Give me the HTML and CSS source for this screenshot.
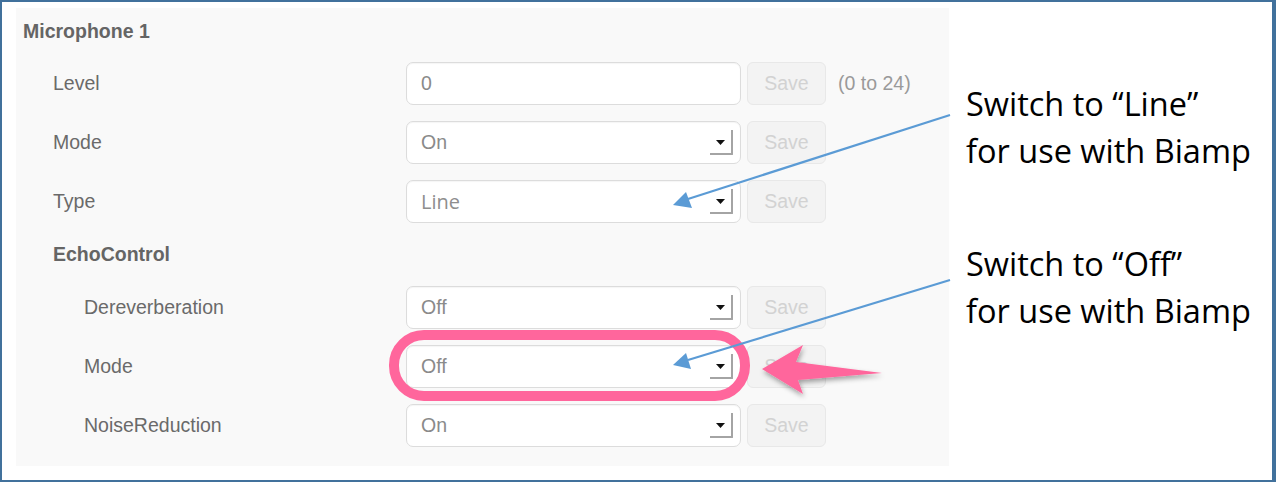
FILE: index.html
```html
<!DOCTYPE html>
<html>
<head>
<meta charset="utf-8">
<link rel="stylesheet" href="styles.css">
</head>
<body>
<div class="frame">
  <div class="panel">
    <div class="heading">Microphone 1</div>
    <div class="row">
      <span class="label">Level</span>
      <div class="field"><span class="value">0</span></div>
      <span class="save">Save</span>
      <span class="hint">(0 to 24)</span>
    </div>
    <div class="row">
      <span class="label">Mode</span>
      <div class="field select"><span class="value">On</span><span class="caret"><svg width="9" height="5" viewBox="0 0 9 5"><path d="M0 0H9L4.5 5Z" fill="#111"/></svg></span></div>
      <span class="save">Save</span>
    </div>
    <div class="row">
      <span class="label">Type</span>
      <div class="field select"><span class="value alt">Line</span><span class="caret"><svg width="9" height="5" viewBox="0 0 9 5"><path d="M0 0H9L4.5 5Z" fill="#111"/></svg></span></div>
      <span class="save">Save</span>
    </div>
    <div class="subheading">EchoControl</div>
    <div class="row sub">
      <span class="label">Dereverberation</span>
      <div class="field select"><span class="value">Off</span><span class="caret"><svg width="9" height="5" viewBox="0 0 9 5"><path d="M0 0H9L4.5 5Z" fill="#111"/></svg></span></div>
      <span class="save">Save</span>
    </div>
    <div class="row sub">
      <span class="label">Mode</span>
      <div class="field select"><span class="value">Off</span><span class="caret"><svg width="9" height="5" viewBox="0 0 9 5"><path d="M0 0H9L4.5 5Z" fill="#111"/></svg></span></div>
      <span class="save">Save</span>
    </div>
    <div class="row sub">
      <span class="label">NoiseReduction</span>
      <div class="field select"><span class="value">On</span><span class="caret"><svg width="9" height="5" viewBox="0 0 9 5"><path d="M0 0H9L4.5 5Z" fill="#111"/></svg></span></div>
      <span class="save">Save</span>
    </div>
  </div>
  <div class="notes">
    <p class="note first">Switch to “Line”<br>for use with Biamp</p>
    <p class="note second">Switch to “Off”<br>for use with Biamp</p>
  </div>
  <svg class="overlay" width="1276" height="482" viewBox="0 0 1276 482">
    <defs>
      <filter id="shadow" x="-20%" y="-30%" width="140%" height="170%">
        <feDropShadow dx="1" dy="3" stdDeviation="2.5" flood-color="#000" flood-opacity="0.35"/>
      </filter>
    </defs>
    <rect x="394" y="335" width="351" height="61" rx="30" ry="30" fill="none" stroke="#ff669c" stroke-width="10"/>
    <path d="M762 369 L803 345 L796 362 L882 373 L798 380 L803 394 Z" fill="#ff669c" filter="url(#shadow)"/>
    <line x1="950" y1="115" x2="688" y2="199" stroke="#5b9bd5" stroke-width="2.2"/>
    <path d="M673 205 L686 192 L692 208 Z" fill="#5b9bd5"/>
    <line x1="950" y1="280" x2="688" y2="360" stroke="#5b9bd5" stroke-width="2.2"/>
    <path d="M673 365 L686 353 L691 369 Z" fill="#5b9bd5"/>
  </svg>
</div>
</body>
</html>
```
FILE: styles.css
```css
* { box-sizing: border-box; }
html, body { margin: 0; padding: 0; background: #fff; }

.frame {
  position: relative;
  width: 1276px;
  height: 482px;
  border-style: solid;
  border-color: #41719c;
  border-width: 2px 4px 2px 2px;
  background: #fff;
  display: flex;
  align-items: flex-start;
}

.panel {
  margin: 6px 0 0 14px;
  width: 933px;
  height: 458px;
  background: #f9f9f9;
  padding: 8px 0 0 7px;
  display: flex;
  flex-direction: column;
  gap: 16px;
  font-family: "Liberation Sans", Arial, sans-serif;
  font-size: 19.5px;
  color: #666;
}

.heading, .subheading {
  height: 31px;
  line-height: 31px;
  font-weight: bold;
  color: #656565;
}
.heading { margin-bottom: -1px; }
.subheading { padding-left: 30px; }

.row {
  display: flex;
  align-items: center;
  height: 43px;
}
.label {
  width: 383px;
  padding-left: 30px;
  color: #6a6a6a;
}
.row.sub .label { padding-left: 61px; }

.field {
  position: relative;
  width: 335px;
  height: 43px;
  background: #fff;
  border: 1px solid #dcdcdc;
  border-radius: 7px;
  box-shadow: inset 0 1px 1px rgba(0,0,0,0.04);
  display: flex;
  align-items: center;
  padding-left: 14px;
}
.value { color: #8a8a8a; }
.value.alt { font-family: "Open Sans", "Liberation Sans", sans-serif; color: #8e8e8e; font-size: 20px; }

.caret {
  position: absolute;
  right: 7px;
  top: 8px;
  width: 23px;
  height: 25px;
  border-right: 2px solid #a4a4a4;
  border-bottom: 2px solid #a4a4a4;
  border-bottom-right-radius: 1px;
  display: flex;
  align-items: center;
  justify-content: center;
  padding-top: 1px;
}
.caret svg { display: block; }

.save {
  margin-left: 6px;
  width: 79px;
  height: 43px;
  border: 1px solid #e8e8e8;
  border-radius: 6px;
  background: #f3f3f3;
  color: #d2d2d2;
  display: flex;
  align-items: center;
  justify-content: center;
}
.hint {
  margin-left: 12px;
  color: #9a9a9a;
}

.notes {
  padding: 78px 0 0 17px;
  font-family: "Open Sans", "Noto Sans", sans-serif;
  font-size: 32.5px;
  line-height: 47px;
  color: #000;
}
.note { margin: 0; }
.note.second { margin-top: 66px; }

.overlay {
  position: absolute;
  left: -2px;
  top: -2px;
  pointer-events: none;
}
```
